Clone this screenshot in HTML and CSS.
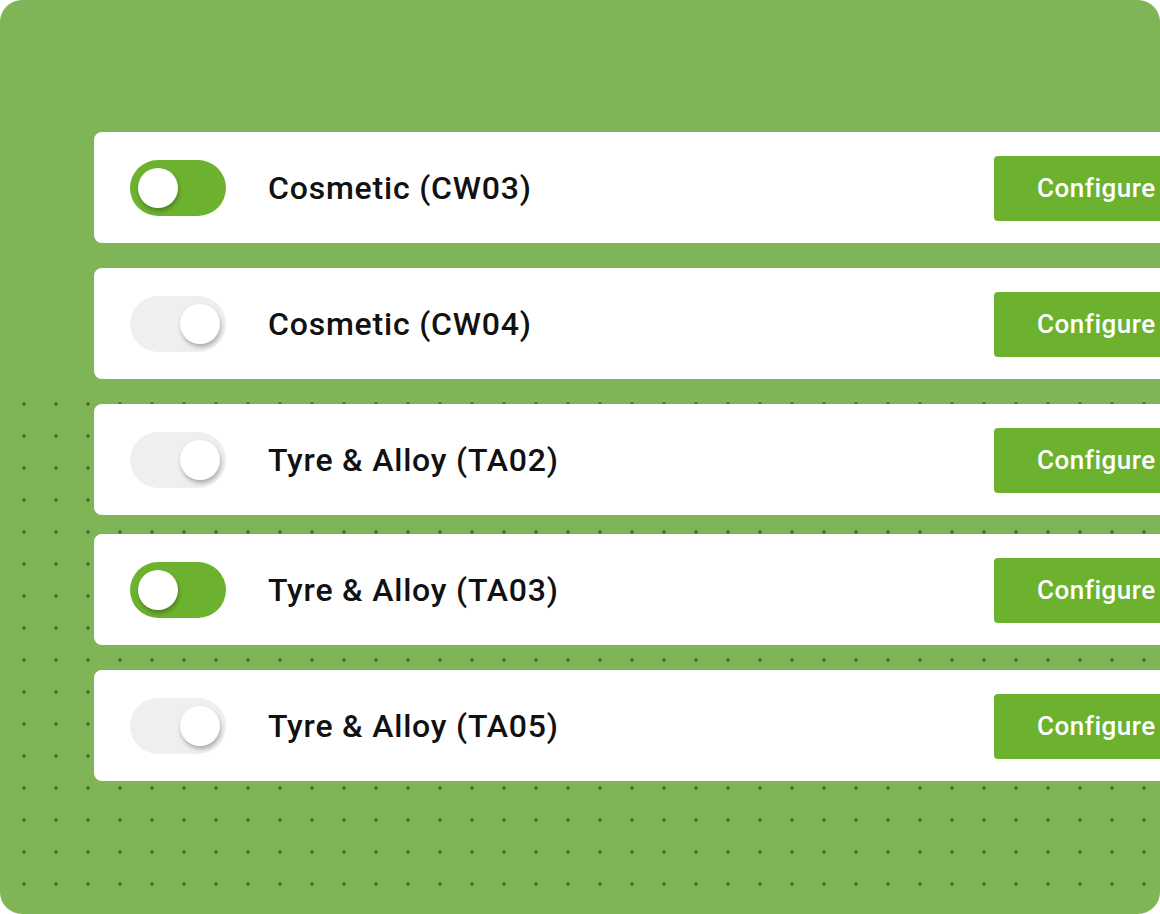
FILE: index.html
```
<!DOCTYPE html>
<html lang="en">
<head>
  <meta charset="UTF-8">
  <title>Checks</title>
  <meta name="viewport" content="width=device-width, initial-scale=1">
  <link rel="stylesheet" href="styles.css">
</head>
<body>
  <div class="panel">
    <div class="list">
      <div class="row">
        <span class="toggle on"><span class="knob"></span></span>
        <span class="label">Cosmetic (CW03)</span>
        <button class="configure">Configure</button>
      </div>
      <div class="row">
        <span class="toggle"><span class="knob"></span></span>
        <span class="label">Cosmetic (CW04)</span>
        <button class="configure">Configure</button>
      </div>
      <div class="row">
        <span class="toggle"><span class="knob"></span></span>
        <span class="label">Tyre &amp; Alloy (TA02)</span>
        <button class="configure">Configure</button>
      </div>
      <div class="row tight">
        <span class="toggle on"><span class="knob"></span></span>
        <span class="label">Tyre &amp; Alloy (TA03)</span>
        <button class="configure">Configure</button>
      </div>
      <div class="row">
        <span class="toggle"><span class="knob"></span></span>
        <span class="label">Tyre &amp; Alloy (TA05)</span>
        <button class="configure">Configure</button>
      </div>
    </div>
  </div>
</body>
</html>
```

FILE: styles.css
```
body {
  margin: 0;
  background: #fff;
  font-family: Roboto, "Liberation Sans", sans-serif;
}
.panel {
  width: 1160px;
  height: 914px;
  box-sizing: border-box;
  padding: 132px 0 0 94px;
  border-radius: 22px;
  overflow: hidden;
  background-color: #7fb557;
  /* plain band on top hides the dot grid above y=403 */
  background-image:
    linear-gradient(#7fb557, #7fb557),
    radial-gradient(circle, #3f6a2e 1.4px, transparent 2px);
  background-size: 100% 402px, 32px 32px;
  background-position: 0 0, 8px 4px;
  background-repeat: no-repeat, repeat;
}
.list {
  display: flex;
  flex-direction: column;
  gap: 25px;
}
.row {
  width: 1120px;
  height: 111px;
  box-sizing: border-box;
  background: #fff;
  border-radius: 8px;
  display: flex;
  align-items: center;
  padding: 0 0 0 36px;
}
.row.tight {
  margin-top: -6px;
}
.toggle {
  width: 96px;
  height: 56px;
  border-radius: 28px;
  background: #efefef;
  display: flex;
  align-items: center;
  justify-content: flex-end;
  padding: 0 6px 0 8px;
  box-sizing: border-box;
  flex-shrink: 0;
}
.toggle.on {
  background: #6cb22f;
  justify-content: flex-start;
}
.knob {
  width: 40px;
  height: 40px;
  border-radius: 50%;
  background: #fff;
  box-shadow: 1px 3px 4px rgba(0,0,0,0.28);
}
.label {
  margin-left: 42px;
  font-size: 32px;
  font-weight: 500;
  letter-spacing: 0.8px;
  color: #111;
  flex: 1;
}
.configure {
  width: 190px;
  height: 65px;
  margin: 2px 30px 0 0;
  border: none;
  border-radius: 4px;
  background: #6cb22f;
  color: #fff;
  font-family: inherit;
  font-size: 26px;
  font-weight: 500;
  letter-spacing: 0.5px;
  text-align: left;
  padding: 0 0 2px 43px;
  flex-shrink: 0;
}
```
